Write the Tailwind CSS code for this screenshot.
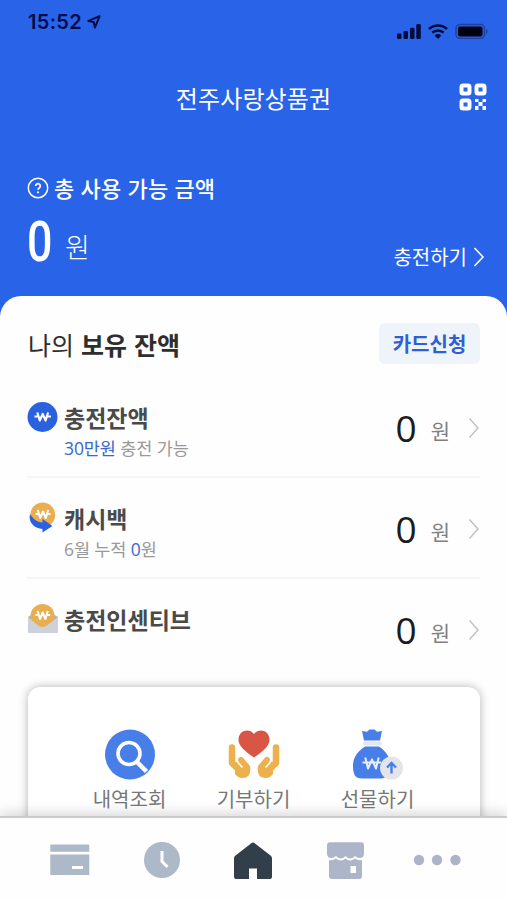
<!DOCTYPE html>
<html lang="ko">
<head>
<meta charset="utf-8">
<meta name="viewport" content="width=device-width, initial-scale=1">
<title>전주사랑상품권</title>
<script src="https://cdn.jsdelivr.net/npm/@tailwindcss/browser@4"></script>
</head>
<body class="bg-[#2963e8] font-['Noto_Sans_CJK_KR','Noto_Sans',sans-serif]">
<div class="relative flex h-[900px] w-[507px] flex-col overflow-hidden bg-[#2963e8]">

  <!-- Status bar -->
  <header class="flex h-[62px] shrink-0 items-start justify-between pl-[28px] pr-[19px]">
    <div class="flex items-center gap-[5px] pt-[10px] text-[#020b4a]">
      <span class="font-['Inter',sans-serif] text-[20px] leading-[24px] font-semibold tracking-[0.3px]">15:52</span>
      <svg class="h-[14px] w-[14px]" viewBox="0 0 14 14" fill="none" stroke="currentColor" stroke-width="2" stroke-linejoin="round"><path d="M12.600 1.200 1.400 6l5.300.9 1.200 5.700z"/></svg>
    </div>
    <div class="flex items-center gap-[7px] pt-[23px] text-[#020b3c]">
      <svg class="h-[16px] w-[24px]" viewBox="0 0 24 16" fill="currentColor"><rect x="0" y="10.500" width="4.500" height="5.500" rx="1.300"/><rect x="6.500" y="8" width="4.500" height="8" rx="1.300"/><rect x="13" y="4.800" width="4.500" height="11.200" rx="1.300"/><rect x="19.300" y="1" width="4.500" height="15" rx="1.300"/></svg>
      <svg class="h-[16px] w-[20px]" viewBox="0 0 20 16" fill="none" stroke="currentColor" stroke-width="2.500"><path d="M1 6a13 13 0 0 1 18 0"/><path d="M4.300 9.700a8.300 8.300 0 0 1 11.400 0"/><path d="M6.700 12.500a5 5 0 0 1 6.600 0L10 16z" fill="currentColor" stroke="none"/></svg>
      <svg class="h-[16px] w-[33px]" viewBox="0 0 33 16"><rect x="1" y="1.500" width="28.500" height="14" rx="4" fill="none" stroke="#1d419d" stroke-width="1.500"/><rect x="3" y="3.500" width="24.500" height="10" rx="2" fill="#00020f"/><path d="M31 6c2 .7 2 4.300 0 5z" fill="#1d419d"/></svg>
    </div>
  </header>

  <!-- Title bar -->
  <div class="grid h-[72px] shrink-0 grid-cols-[1fr_auto_1fr] items-center text-white">
    <span></span>
    <h1 class="text-[24px] leading-[36px] font-normal tracking-[0.1px]">전주사랑상품권</h1>
    <svg class="mr-[20px] mb-[2px] h-[28px] w-[28px] justify-self-end" viewBox="0 0 28 28" fill="none" stroke="#fff" stroke-width="4"><rect x="2.500" y="2.500" width="8" height="8" rx="1.500"/><rect x="17.500" y="2.500" width="8" height="8" rx="1.500"/><rect x="2.500" y="17.500" width="8" height="8" rx="1.500"/><path stroke="none" fill="#fff" d="M16 16h3.500v3H16zM23.500 16H27v3h-3.500zM19.500 19h4v4h-4zM16 23h3.500v4H16zM23.500 23H27v4h-3.500z"/></svg>
  </div>

  <!-- Total balance -->
  <section class="flex h-[162px] shrink-0 items-end justify-between pr-[22px] pl-[27px] text-white">
    <div class="h-full pt-[37px]">
      <div class="flex items-center gap-[5px]">
        <svg class="mt-[2px] h-[22px] w-[22px]" viewBox="0 0 22 22" fill="none" stroke="#fff" stroke-width="1.500"><circle cx="11" cy="11" r="9.700"/><path d="M8.700 9a2.300 2.300 0 1 1 3.500 2c-.8.500-1.200.9-1.200 1.800" stroke-width="1.700"/><circle cx="11" cy="15.300" r="1.100" fill="#fff" stroke="none"/></svg>
        <span class="text-[22px] leading-[32px] font-medium tracking-[0.1px]">총 사용 가능 금액</span>
      </div>
      <div class="mt-[12px] flex items-start">
        <span class="inline-block w-[26px] origin-top-left scale-x-[0.8] font-['Roboto',sans-serif] text-[56px] leading-[54px] font-medium">0</span>
        <span class="mt-[14px] ml-[12px] text-[27px] leading-[36px] font-light">원</span>
      </div>
    </div>
    <div class="mb-[25px] flex items-center gap-[6px]">
      <span class="text-[20px] leading-[28px]">충전하기</span>
      <svg class="h-[20px] w-[12px]" viewBox="0 0 12 20" fill="none" stroke="#fff" stroke-width="1.600"><path d="m1.500 1 8.500 9-8.500 9"/></svg>
    </div>
  </section>

  <!-- Balance sheet -->
  <main class="flex grow flex-col rounded-t-[21px] bg-[#fefefe] px-[27px]">
    <div class="flex h-[80px] shrink-0 items-center justify-between pt-[15px]">
      <h2 class="ml-[1px] pt-[1px] text-[25px] leading-[36px] font-normal text-[#2e2e2e]">나의 <b class="font-bold">보유 잔액</b></h2>
      <button class="flex h-[41px] w-[101px] items-center justify-center rounded-[6px] bg-[#eef4f9] text-[20px] font-bold text-[#2f60d3]">카드신청</button>
    </div>

    <div class="flex h-[102px] shrink-0 items-start border-b-2 border-[#f5f5f5] pt-[24px]">
      <svg class="mt-[1px] h-[32px] w-[32px] shrink-0" viewBox="0 0 32 32"><circle cx="15.500" cy="16" r="15" fill="#2a61df"/><path d="m10.300 11.500 2.500 8 2.900-6.500 2.900 6.500 2.500-8M7.500 15.500h4M20 15.500h4" fill="none" stroke="#fff" stroke-width="2.200" stroke-linejoin="round"/></svg>
      <div class="ml-[5px] grow">
        <div class="text-[23px] leading-[34px] font-bold text-[#4a4a4a]">충전잔액</div>
        <div class="font-['Open_Sans','Noto_Sans_CJK_KR',sans-serif] text-[17.5px] leading-[28px] font-normal tracking-[-0.100px] text-[#999]"><span class="text-[#3868cf]">30만원</span> 충전 가능</div>
      </div>
      <div class="flex items-center pt-[4px]"><span class="font-['Open_Sans',sans-serif] text-[37px] leading-[48px] font-normal text-[#1c1c1c]">0</span><span class="mt-[4px] ml-[14px] text-[21px] leading-[30px] font-normal text-[#808080]">원</span><svg class="ml-[18px] h-[22px] w-[12px]" viewBox="0 0 12 22" fill="none" stroke="#c2c2c2" stroke-width="1.500"><path d="m1.500 1.500 8.500 9.500-8.500 9.500"/></svg></div>
    </div>

    <div class="flex h-[101px] shrink-0 items-start border-b-2 border-[#f5f5f5] pt-[23px]">
      <svg class="mt-[1px] h-[32px] w-[32px] shrink-0" viewBox="0 0 32 32"><circle cx="15.700" cy="13" r="12.500" fill="#e8ae50"/><path d="m10.800 8 2.400 8 2.800-6.500 2.800 6.500 2.400-8M8.500 12h3.500M20 12h3.500" fill="none" stroke="#fff" stroke-width="2" stroke-linejoin="round"/><path d="M3 12c3 5 7 8 12.500 8.500V17l10 7-10 6.500V27C7 26.500 1 20 3 12z" fill="#2a61df"/></svg>
      <div class="ml-[5px] grow">
        <div class="text-[23px] leading-[34px] font-bold text-[#4a4a4a]">캐시백</div>
        <div class="font-['Open_Sans','Noto_Sans_CJK_KR',sans-serif] text-[17.5px] leading-[28px] font-normal tracking-[-0.100px] text-[#999]">6월 누적 <span class="text-[#3868cf]">0</span>원</div>
      </div>
      <div class="flex items-center pt-[4px]"><span class="font-['Open_Sans',sans-serif] text-[37px] leading-[48px] font-normal text-[#1c1c1c]">0</span><span class="mt-[4px] ml-[14px] text-[21px] leading-[30px] font-normal text-[#808080]">원</span><svg class="ml-[18px] h-[22px] w-[12px]" viewBox="0 0 12 22" fill="none" stroke="#c2c2c2" stroke-width="1.500"><path d="m1.500 1.500 8.500 9.500-8.500 9.500"/></svg></div>
    </div>

    <div class="flex h-[108px] shrink-0 items-start pt-[23px]">
      <svg class="mt-[1px] h-[32px] w-[32px] shrink-0" viewBox="0 0 32 32"><path d="M1 14l5-3h20l5 3v14q0 2-2 2H3q-2 0-2-2z" fill="#b0b4be"/><circle cx="15.500" cy="13" r="12" fill="#e8ae50"/><path d="m10.600 8 2.400 8 2.700-6.500 2.700 6.500 2.400-8M8.300 12h3.500M19.700 12h3.500" fill="none" stroke="#fff" stroke-width="2" stroke-linejoin="round"/><path d="M1 14l9.500 8q5 4 10 0L31 14v14q0 2-2 2H3q-2 0-2-2z" fill="#cdd1da"/></svg>
      <div class="ml-[5px] grow text-[23px] leading-[34px] font-bold text-[#4a4a4a]">충전인센티브</div>
      <div class="flex items-center pt-[4px]"><span class="font-['Open_Sans',sans-serif] text-[37px] leading-[48px] font-normal text-[#1c1c1c]">0</span><span class="mt-[4px] ml-[14px] text-[21px] leading-[30px] font-normal text-[#808080]">원</span><svg class="ml-[18px] h-[22px] w-[12px]" viewBox="0 0 12 22" fill="none" stroke="#c2c2c2" stroke-width="1.500"><path d="m1.500 1.500 8.500 9.500-8.500 9.500"/></svg></div>
    </div>

    <!-- Shortcuts -->
    <section class="mr-0 ml-[1px] flex h-[160px] shrink-0 justify-center rounded-t-[12px] bg-white pr-[1px] pt-[42px] text-[20px] leading-[28px] font-normal text-[#777] shadow-[0_0_10px_rgba(0,0,0,0.3)]">
      <div class="flex w-[124px] flex-col items-center">
        <svg class="h-[51px] w-[52px]" viewBox="0 0 52 51"><circle cx="26" cy="25.500" r="25" fill="#477ee8"/><circle cx="25" cy="24.500" r="11" fill="none" stroke="#fff" stroke-width="3.600"/><path d="m33 33 9.500 9.500" stroke="#fff" stroke-width="4.500"/></svg>
        <span class="mt-[5px]">내역조회</span>
      </div>
      <div class="flex w-[124px] flex-col items-center">
        <svg class="h-[51px] w-[52px]" viewBox="0 0 52 51"><path d="M26 28.500C17 22 10.500 17.500 10.500 10.500 10.500 1.500 21-1.500 26 5c5-6.500 15.500-3.500 15.500 5.500 0 7-6.500 11.500-15.500 18z" fill="#d95545"/><g id="hand"><path d="M4 18.500V34l8 8" fill="none" stroke="#eeb04d" stroke-width="6.500" stroke-linecap="round" stroke-linejoin="round"/><path d="M7 33h6l9 4q2 12-8 12-4 0-7-4z" fill="#eeb04d"/><path d="m13 31 5.500 6.500" fill="none" stroke="#eeb04d" stroke-width="6" stroke-linecap="round"/><path d="m9 30.500 1 3 4 4.500" fill="none" stroke="#fff" stroke-width="1.600" stroke-linecap="round"/></g><use href="#hand" transform="matrix(-1 0 0 1 52 0)"/></svg>
        <span class="mt-[5px]">기부하기</span>
      </div>
      <div class="flex w-[124px] flex-col items-center">
        <svg class="h-[51px] w-[52px]" viewBox="0 0 52 51"><path d="M10 2l5 .8L17.500.500h5L25 2.800l5-.8-2 9.500H12z" fill="#477ee8"/><rect x="11" y="12.500" width="18.500" height="4" rx="1" fill="#e3e7ef"/><path d="M13 17.500h14c6 4 11 10 11 18 0 9-3 14-9 14H10c-7 0-9-4-9-13 0-9 6-15 12-19z" fill="#477ee8"/><path d="m13.300 28.500 2.700 11 4-9 4 9 2.700-11M10.500 33.500h18.500" fill="none" stroke="#e8eefc" stroke-width="2" stroke-linejoin="round"/><circle cx="39.500" cy="39" r="11.500" fill="#e3e5e9"/><path d="M39.500 44.500V34.500m-4.500 4 4.500-4.500 4.500 4.500" fill="none" stroke="#477ee8" stroke-width="2.400"/></svg>
        <span class="mt-[5px]">선물하기</span>
      </div>
    </section>
  </main>

  <!-- Tab bar -->
  <nav class="absolute inset-x-0 bottom-0 flex h-[84px] items-start border-t-2 border-[#cacaca] bg-[#fefefe] pt-[24px] shadow-[0_-3px_12px_rgba(0,0,0,0.16)]">
    <svg class="ml-[50px] h-[38px] w-[40px]" viewBox="0 0 40 38" fill="#adb8c9"><path d="M.3 2.500h39v7.300H.3zM.3 12.500h39v20.500H.3z"/><path d="M22 24h11v3H22z" fill="#fff"/></svg>
    <svg class="ml-[53px] h-[38px] w-[38px]" viewBox="0 0 38 38"><circle cx="19" cy="18" r="18" fill="#adb8c9"/><path d="M19 9v10.500l5.500 5.500" fill="none" stroke="#fff" stroke-width="3"/></svg>
    <svg class="ml-[53px] h-[38px] w-[38px]" viewBox="0 0 38 38"><path d="M19 .5q1 0 2 1l15.500 12q1.500 1 1.500 3V35q0 2-2 2H23V26.500h-8V37H2q-2 0-2-2V16.500q0-2 1.500-3l15.500-12q1-1 2-1z" fill="#333e4b"/></svg>
    <svg class="ml-[55px] h-[38px] w-[38px]" viewBox="0 0 38 38" fill="#adb5c8"><path d="M3 .3h31q3 0 3 3V11q0 5-4 5-3 0-5-2-5 5-9.500 0-4.500 5-9.500 0-2 2-5 2-4 0-4-5V3.300q0-3 3-3z"/><path d="M2 18q4 1 7-1.500 5 4 9.500 0 4.500 4 9.500 0 3 2.500 7 1.500v16q0 3-3 3H5q-3 0-3-3z"/><path d="M23.500 24H29v7h-5.500z" fill="#fff"/></svg>
    <svg class="ml-[48px] h-[38px] w-[48px]" viewBox="0 0 48 38" fill="#adb3c8"><circle cx="6" cy="18" r="5.200"/><circle cx="24" cy="18" r="5.200"/><circle cx="42.500" cy="18" r="5.200"/></svg>
  </nav>
</div>
</body>
</html>
